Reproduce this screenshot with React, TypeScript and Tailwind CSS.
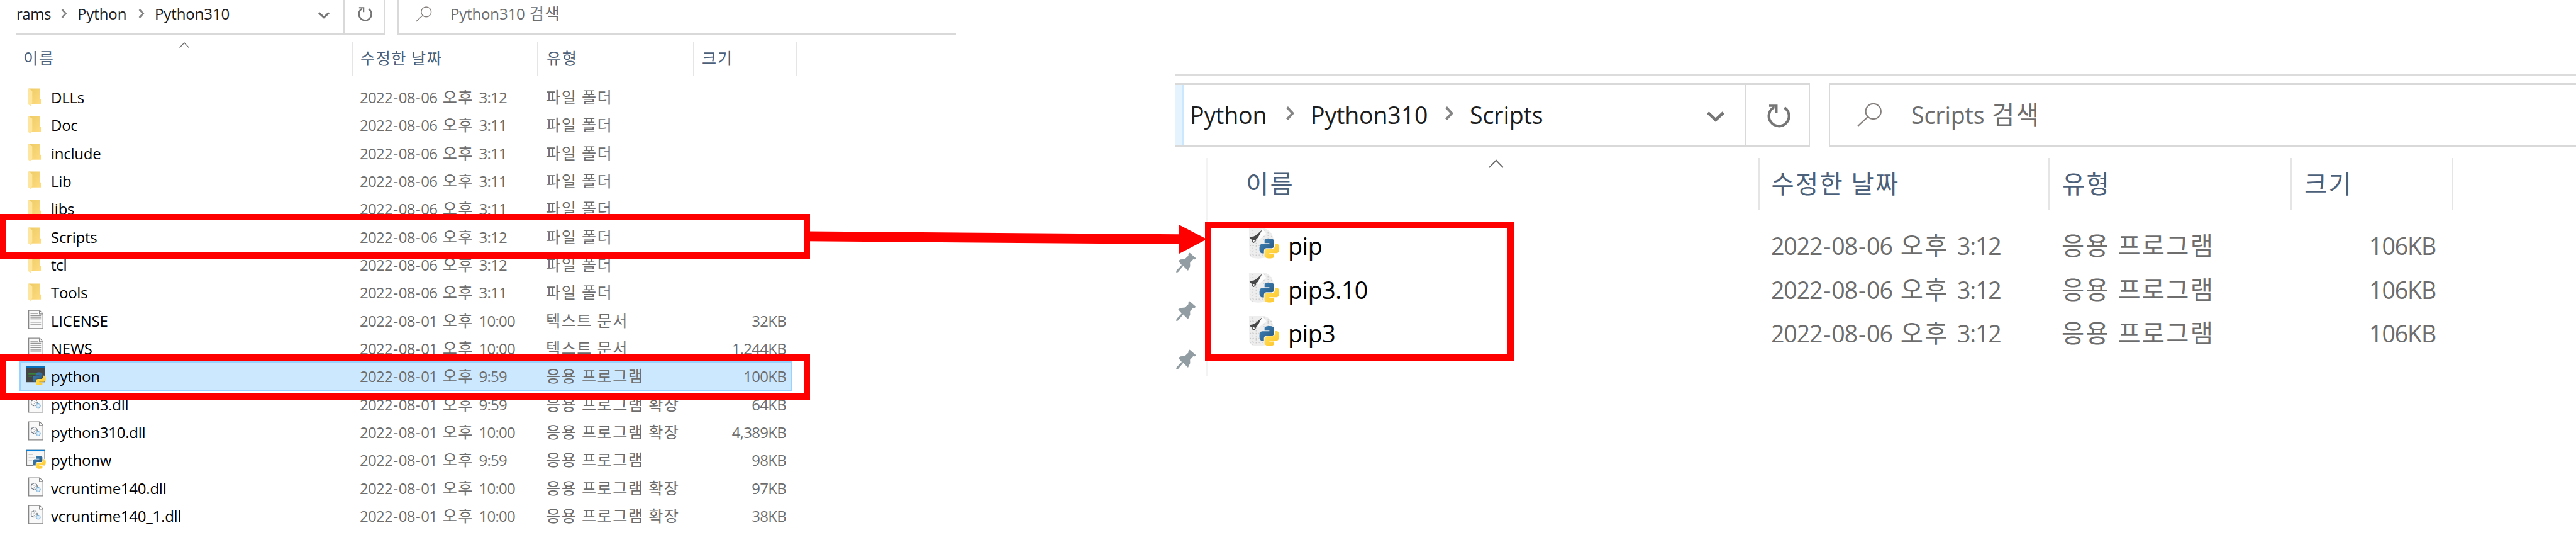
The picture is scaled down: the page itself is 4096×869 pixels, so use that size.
import { Fragment, type ReactNode } from "react";

type Kind = "folder" | "text" | "console" | "dll" | "window" | "pip";
type Entry = { name: string; kind: Kind; date: string; type: string; size?: string; selected?: boolean };

const leftEntries: Entry[] = [
  { name: "DLLs", kind: "folder", date: "2022-08-06 오후 3:12", type: "파일 폴더" },
  { name: "Doc", kind: "folder", date: "2022-08-06 오후 3:11", type: "파일 폴더" },
  { name: "include", kind: "folder", date: "2022-08-06 오후 3:11", type: "파일 폴더" },
  { name: "Lib", kind: "folder", date: "2022-08-06 오후 3:11", type: "파일 폴더" },
  { name: "libs", kind: "folder", date: "2022-08-06 오후 3:11", type: "파일 폴더" },
  { name: "Scripts", kind: "folder", date: "2022-08-06 오후 3:12", type: "파일 폴더" },
  { name: "tcl", kind: "folder", date: "2022-08-06 오후 3:12", type: "파일 폴더" },
  { name: "Tools", kind: "folder", date: "2022-08-06 오후 3:11", type: "파일 폴더" },
  { name: "LICENSE", kind: "text", date: "2022-08-01 오후 10:00", type: "텍스트 문서", size: "32KB" },
  { name: "NEWS", kind: "text", date: "2022-08-01 오후 10:00", type: "텍스트 문서", size: "1,244KB" },
  { name: "python", kind: "console", date: "2022-08-01 오후 9:59", type: "응용 프로그램", size: "100KB", selected: true },
  { name: "python3.dll", kind: "dll", date: "2022-08-01 오후 9:59", type: "응용 프로그램 확장", size: "64KB" },
  { name: "python310.dll", kind: "dll", date: "2022-08-01 오후 10:00", type: "응용 프로그램 확장", size: "4,389KB" },
  { name: "pythonw", kind: "window", date: "2022-08-01 오후 9:59", type: "응용 프로그램", size: "98KB" },
  { name: "vcruntime140.dll", kind: "dll", date: "2022-08-01 오후 10:00", type: "응용 프로그램 확장", size: "97KB" },
  { name: "vcruntime140_1.dll", kind: "dll", date: "2022-08-01 오후 10:00", type: "응용 프로그램 확장", size: "38KB" },
];

const rightEntries: Entry[] = [
  { name: "pip", kind: "pip", date: "2022-08-06 오후 3:12", type: "응용 프로그램", size: "106KB" },
  { name: "pip3.10", kind: "pip", date: "2022-08-06 오후 3:12", type: "응용 프로그램", size: "106KB" },
  { name: "pip3", kind: "pip", date: "2022-08-06 오후 3:12", type: "응용 프로그램", size: "106KB" },
];

/* Hangul runs are set in the CJK face on a one-em pitch, hyphens get wide sides; the rest uses the Latin face. */
function Label({ children }: { children: string }) {
  const runs = children.split(/([\uac00-\ud7a3]+|-)/).filter(Boolean);
  return (
    <>
      {runs.map((run, i) => {
        if (run === "-") return <span key={i} className="px-[0.055em]">-</span>;
        return /[\uac00-\ud7a3]/.test(run) ? (
          <span key={i} className="font-['Noto_Sans_CJK_KR',sans-serif] text-[1.05em] leading-[0] tracking-[0.058em]">
            {run}
          </span>
        ) : (
          <Fragment key={i}>{run}</Fragment>
        );
      })}
    </>
  );
}

function Snake({ transform, outline }: { transform: string; outline?: boolean }) {
  const blue =
    "M14.25.18l.9.2.73.26.59.3.45.32.34.34.25.34.16.33.1.3.04.26.02.2-.01.13V8.5l-.05.63-.13.55-.21.46-.26.38-.3.31-.33.25-.35.19-.35.14-.33.1-.3.07-.26.04-.21.02H8.77l-.69.05-.59.14-.5.22-.41.27-.33.32-.27.35-.2.36-.15.37-.1.35-.07.32-.04.27-.02.21v3.06H3.17l-.21-.03-.28-.07-.32-.12-.35-.18-.36-.26-.36-.36-.35-.46-.32-.59-.28-.73-.21-.88-.14-1.05-.05-1.23.06-1.22.16-1.04.24-.87.32-.71.36-.57.4-.44.42-.33.42-.24.4-.16.36-.1.32-.05.24-.01h.16l.06.01h8.16v-.83H6.18l-.01-2.75-.02-.37.05-.34.11-.31.17-.28.25-.26.31-.23.38-.2.44-.18.51-.15.58-.12.64-.1.71-.06.77-.04.84-.02 1.27.05z";
  const yellow =
    "M21.04 6.11l.28.06.32.12.35.18.36.27.36.35.35.47.32.59.28.73.21.88.14 1.04.05 1.23-.06 1.23-.16 1.04-.24.86-.32.71-.36.57-.4.45-.42.33-.42.24-.4.16-.36.09-.32.05-.24.02-.16-.01h-8.22v.82h5.84l.01 2.76.02.36-.05.34-.11.31-.17.29-.25.25-.31.24-.38.2-.44.17-.51.15-.58.13-.64.09-.71.07-.77.04-.84.01-1.27-.04-1.07-.14-.9-.2-.73-.25-.59-.3-.45-.33-.34-.34-.25-.34-.16-.33-.1-.3-.04-.25-.02-.2.01-.13v-5.34l.05-.64.13-.54.21-.46.26-.38.3-.32.33-.24.35-.2.35-.14.33-.1.3-.06.26-.04.21-.02.13-.01h5.84l.69-.05.59-.14.5-.21.41-.28.33-.32.27-.35.2-.36.15-.36.1-.35.07-.32.04-.28.02-.21V6.07h2.09z";
  return (
    <g transform={transform}>
      {outline && <path d={blue + yellow} fill="#fff" stroke="#fff" strokeWidth="1.2" />}
      <path d={blue} fill="url(#snakeBlue)" />
      <path d={yellow} fill="url(#snakeYellow)" />
    </g>
  );
}

const page = "M2.3.6H10.9L13.5 3.2V14.8H2.3Z";

const art: Record<Kind, ReactNode> = {
  folder: (
    <>
      <path d="M2.2 1.2H11.1V9.3L11.9 10V13.7H2.2Z" fill="url(#folderBody)" />
      <path d="M2.2 1.2L5.1 3.2V12.8L4.4 13.6V15.4L2.2 14Z" fill="#ffe69c" />
    </>
  ),
  text: (
    <>
      <path d={page} fill="#f9f9f9" stroke="#858585" strokeWidth=".65" />
      <path d="M10.7.7V3.4H13.4" fill="#fff" stroke="#858585" strokeWidth=".55" />
      <path d="M3.7 3H9.8M3.7 4.7H12M3.7 6.4H12M3.7 8.1H12M3.7 9.8H12M3.7 11.5H12" stroke="#959595" strokeWidth=".65" />
    </>
  ),
  dll: (
    <>
      <path d={page} fill="#f9f9f9" stroke="#858585" strokeWidth=".65" />
      <path d="M10.7.7V3.4H13.4" fill="#fff" stroke="#858585" strokeWidth=".55" />
      <circle cx="6.6" cy="7.3" r="2.4" fill="#fbfbfb" stroke="#66717a" strokeWidth=".7" strokeDasharray=".9 .35" />
      <circle cx="6.6" cy="7.3" r=".9" fill="none" stroke="#7c858b" strokeWidth=".45" strokeDasharray=".5 .4" />
      <circle cx="9.8" cy="9.7" r="1.6" fill="#d3e9f8" stroke="#7fb3d8" strokeWidth=".7" strokeDasharray=".8 .25" />
      <circle cx="9.8" cy="9.7" r=".45" fill="#fff" />
    </>
  ),
  console: (
    <>
      <rect x=".5" y=".4" width="14.6" height="12.6" fill="#444" />
      <rect x=".5" y=".4" width="14.6" height="1.1" fill="#0a6fbd" />
      <path d="M2.1 4.2H5.6M2.1 8.6H5" stroke="#327a35" strokeWidth=".5" />
      <path d="M2.1 6.4H8" stroke="#36983b" strokeWidth=".6" />
      <Snake transform="translate(5.5 5.2) scale(.425)" />
    </>
  ),
  window: (
    <>
      <rect x=".75" y=".6" width="14.1" height="12" fill="#f6f6f6" stroke="#7d7d7d" strokeWidth=".55" />
      <rect x=".5" y=".4" width="14.6" height="1.1" fill="#0a7fd6" />
      <path d="M2.2 4.2H5.6M2.2 6.4H7.4M2.2 8.5H5" stroke="#cfcfcf" strokeWidth=".6" />
      <Snake transform="translate(5.5 5) scale(.425)" outline />
    </>
  ),
  pip: (
    <>
      <path d="M.6.3H8.4C11 1 12.8 3.2 13 6.4V9L9 15C4.5 16 1 15.2.8 13.4Z" fill="#eeeeee" />
      <path
        d="M2.2 1V15M4.2 6V15M6.2 8V15M8.2 1V6M10.2 2V6M12 4V6M1 3H12M1 9H6M1 11.5H8M1 13.7H9"
        stroke="#c9c9c9"
        strokeWidth=".4"
        strokeDasharray=".6 .9"
      />
      <path d="M7.6.5L5 3.4 5.4 6.2 9.4 3Z" fill="#fdfdfd" />
      <path d="M7.2 1L5.2 4.8 4.2 5.8 3.9 7 3 7.6 2.2 7 2.3 6 1 5.5 .9 4.8 2.4 4.6 4 3.8Z" fill="#484848" />
      <circle cx="3" cy="6.5" r=".45" fill="#fff" />
      <Snake transform="translate(5.9 5.4) scale(.415)" />
    </>
  ),
};

function FileIcon({ kind, className }: { kind: Kind; className: string }) {
  return (
    <svg viewBox="0 0 16 16" className={className}>
      {art[kind]}
    </svg>
  );
}

function ChevronRight({ className }: { className: string }) {
  return (
    <svg viewBox="0 0 10 15" className={className} fill="none" stroke="#858585" strokeWidth="2.7">
      <path d="M1.6 1L7.6 7.5 1.6 14" />
    </svg>
  );
}

function ChevronDown({ className }: { className: string }) {
  return (
    <svg viewBox="0 0 20 12" className={className} fill="none" stroke="#767676" strokeWidth="3.4">
      <path d="M1.2 1.4L10 9.6 18.8 1.4" />
    </svg>
  );
}

function Refresh({ className }: { className: string }) {
  return (
    <svg viewBox="0 0 31 31" className={className} fill="none" stroke="#757575" strokeWidth="3.4">
      <path d="M23 4.2A13.4 13.4 0 1 1 9.6 3.4" />
      <path d="M2.5 1.7H12.3V11" strokeWidth="3" />
    </svg>
  );
}

function Magnifier({ className }: { className: string }) {
  return (
    <svg viewBox="0 0 35 33" className={className} fill="none" stroke="#85807e" strokeWidth="1.9">
      <circle cx="22.5" cy="11.7" r="10.6" />
      <path d="M15 19.2L1 32" />
    </svg>
  );
}

function SortCaret({ className }: { className: string }) {
  return (
    <svg viewBox="0 0 16 9" className={className} fill="none" stroke="#6a6a6a" strokeWidth="1.3">
      <path d="M.6 8.6L8 1 15.4 8.6" />
    </svg>
  );
}

function Pin({ className }: { className: string }) {
  return (
    <svg viewBox="0 0 32 32" className={className} fill="#929da3">
      <path d="M21.6.4L31.6 9.2 29.6 11.2 27.2 11 22.2 16.6 22.4 22 19 29 11.4 21.6 3 31.4 0 31.8 .8 28.6 9 20 3.4 13.6 7 11.2 14 10.6 19.6 5.2 19.6 2.4Z" />
    </svg>
  );
}

function PythonFolder() {
  return (
    <section className="h-[869px] w-[1520px] shrink-0 text-[24px] text-[#6d6d6d]">
      <div className="flex h-[55px] pl-[25px]">
        <div className="flex w-[587px] border-r-2 border-b-2 border-[#d9d9d9]">
          <div className="flex w-[523px] border-r-2 border-[#d9d9d9] leading-[43px] text-[#1c1c1c]">
            <span className="w-[72px] pl-px tracking-[-0.02em]">rams</span>
            <ChevronRight className="mt-[14px] h-[15px] w-[10px]" />
            <span className="ml-4 w-[97px] tracking-[-0.004em]">Python</span>
            <ChevronRight className="mt-[14px] h-[15px] w-[10px]" />
            <span className="ml-4 w-[260px] tracking-[-0.004em]">Python310</span>
            <ChevronDown className="mt-[19px] h-[11px] w-[18px]" />
          </div>
          <Refresh className="mt-[11px] ml-[21px] h-[23px] w-[23px]" />
        </div>
        <div className="ml-5 flex w-[888px] border-b-2 border-l-2 border-[#d9d9d9] leading-[43px]">
          <Magnifier className="mt-[10px] ml-[27px] h-[25px] w-[26px]" />
          <span className="ml-[29px] tracking-[-0.007em] [word-spacing:0.05em]">
            <Label>Python310 검색</Label>
          </span>
        </div>
      </div>

      <div className="relative mt-[11px] grid h-[52px] grid-cols-[562px_294px_248px_163px] leading-[54px] text-[#4c607a] [word-spacing:0.04em]">
        <div className="border-r-2 border-[#e5e5e5] pl-[37px]"><Label>이름</Label></div>
        <div className="border-r-2 border-[#e5e5e5] pl-[11px]"><Label>수정한 날짜</Label></div>
        <div className="border-r-2 border-[#e5e5e5] pl-[13px]"><Label>유형</Label></div>
        <div className="border-r-2 border-[#e5e5e5] pl-[12px]"><Label>크기</Label></div>
        <SortCaret className="absolute top-px left-[285px] h-[9px] w-[16px]" />
      </div>

      <div className="mt-[14px] ml-8 w-[1227px]">
        {leftEntries.map((e) => (
          <div
            key={e.name}
            className={`grid h-[44.33px] grid-cols-[49px_491px_296px_190px_192px] leading-[46px] ${
              e.selected ? "bg-[#cce8ff] outline-2 -outline-offset-1 outline-[#99d1ff]" : ""
            }`}
          >
            <FileIcon kind={e.kind} className="mt-[5.5px] ml-[9px] h-[32.3px] w-[32.3px]" />
            <span className="tracking-[-0.01em] text-black">{e.name}</span>
            <span className="tracking-[-0.03em] whitespace-nowrap [word-spacing:0.12em]"><Label>{e.date}</Label></span>
            <span className="whitespace-nowrap [word-spacing:0.06em]"><Label>{e.type}</Label></span>
            <span className="text-right tracking-[-0.03em]">{e.size}</span>
          </div>
        ))}
      </div>
    </section>
  );
}

function ScriptsFolder() {
  return (
    <section className="ml-[349px] flex h-[869px] min-w-0 flex-1 flex-col pt-[117px] text-[37.5px] text-[#6d6d6d]">
      <div className="h-[3px] bg-[#dcdcdc]" />
      <div className="mt-[12px] flex h-[101px]">
        <div className="flex w-[1009px] border-y-3 border-r-2 border-[#d9d9d9]">
          <div className="w-[13px] border-r-2 border-[#cce8ff] bg-[#e5f3ff]" />
          <div className="flex w-[895px] border-r-2 border-[#d9d9d9] leading-[95px] text-[#1c1c1c]">
            <span className="w-[162px] pl-[10px] tracking-[-0.004em]">Python</span>
            <ChevronRight className="mt-[34px] h-[22px] w-[15px]" />
            <span className="ml-[25px] w-[213px] tracking-[-0.004em]">Python310</span>
            <ChevronRight className="mt-[34px] h-[22px] w-[15px]" />
            <span className="ml-[25px] w-[377px] tracking-[-0.004em]">Scripts</span>
            <ChevronDown className="mt-[42px] h-[17px] w-[28px]" />
          </div>
          <Refresh className="mt-[31px] ml-[33px] h-[37px] w-[37px]" />
        </div>
        <div className="ml-[30px] flex flex-1 border-y-3 border-l-2 border-[#d9d9d9] leading-[95px]">
          <Magnifier className="mt-[28px] ml-[43px] h-[39px] w-[40px]" />
          <span className="ml-[46px] tracking-[-0.004em] [word-spacing:0.05em]">
            <Label>Scripts 검색</Label>
          </span>
        </div>
      </div>

      <div className="mt-[18px] flex h-[346px]">
        <div className="flex w-[51px] flex-col gap-[45px] border-r-2 border-[#f3f3f3] pt-[150px] pl-px">
          <Pin className="h-[32px] w-[32px]" />
          <Pin className="h-[32px] w-[32px]" />
          <Pin className="h-[32px] w-[32px]" />
        </div>
        <div className="flex-1">
          <div className="relative grid h-[81px] grid-cols-[877.5px_461.5px_385px_256.5px] leading-[83px] text-[#4c607a] [word-spacing:0.05em]">
            <div className="border-r-2 border-[#e5e5e5] pl-[61px]"><Label>이름</Label></div>
            <div className="border-r-2 border-[#e5e5e5] pl-[19px]"><Label>수정한 날짜</Label></div>
            <div className="border-r-2 border-[#e5e5e5] pl-[20px]"><Label>유형</Label></div>
            <div className="border-r-2 border-[#e5e5e5] pl-[20px]"><Label>크기</Label></div>
            <SortCaret className="absolute top-[2px] left-[447px] h-[14px] w-[24px]" />
          </div>
          <div className="mt-[23px]">
            {rightEntries.map((e) => (
              <div key={e.name} className="grid h-[69.6px] grid-cols-[128px_768px_462px_300px_295px] leading-[71px]">
                <FileIcon kind={e.kind} className="mt-[7px] ml-[64px] h-[50.5px] w-[50.5px]" />
                <span className="tracking-[-0.01em] text-black">{e.name}</span>
                <span className="tracking-[-0.03em] whitespace-nowrap [word-spacing:0.12em]"><Label>{e.date}</Label></span>
                <span className="whitespace-nowrap [word-spacing:0.07em]"><Label>{e.type}</Label></span>
                <span className="text-right tracking-[-0.03em]">{e.size}</span>
              </div>
            ))}
          </div>
        </div>
      </div>
    </section>
  );
}

export default function App() {
  return (
    <main className="relative flex h-[869px] w-[4096px] overflow-hidden bg-white font-['Open_Sans','Noto_Sans_CJK_KR',sans-serif]">
      <svg className="absolute h-0 w-0">
        <defs>
          <linearGradient id="snakeBlue" x1="0" y1="0" x2="1" y2="1">
            <stop offset="0" stopColor="#3c84bd" />
            <stop offset="1" stopColor="#2a5479" />
          </linearGradient>
          <linearGradient id="snakeYellow" x1="0" y1="0" x2="1" y2="1">
            <stop offset="0" stopColor="#ffe55f" />
            <stop offset="1" stopColor="#ffc125" />
          </linearGradient>
          <linearGradient id="folderBody" x1="0" y1="0" x2="1" y2="1">
            <stop offset="0" stopColor="#eccb66" />
            <stop offset="1" stopColor="#ffdc80" />
          </linearGradient>
        </defs>
      </svg>

      <PythonFolder />
      <ScriptsFolder />

      {/* Red callouts over the two listings */}
      <div className="absolute top-[339.5px] left-0 h-[71.5px] w-[1288px] border-[10.5px] border-[#ff0000]" />
      <div className="absolute top-[562.5px] left-0 h-[72px] w-[1288px] border-[10.5px] border-[#ff0000]" />
      <div className="absolute top-[352px] left-[1916px] h-[221px] w-[490.5px] border-[10.5px] border-[#ff0000]" />
      <svg className="absolute top-[340px] left-[1280px] h-[80px] w-[640px]" viewBox="1280 340 640 80" fill="#ff0000">
        <path d="M1284 367.6L1874 372.2V356.8L1919 380 1874 403.4V387.9L1284 383.3Z" />
      </svg>
    </main>
  );
}
